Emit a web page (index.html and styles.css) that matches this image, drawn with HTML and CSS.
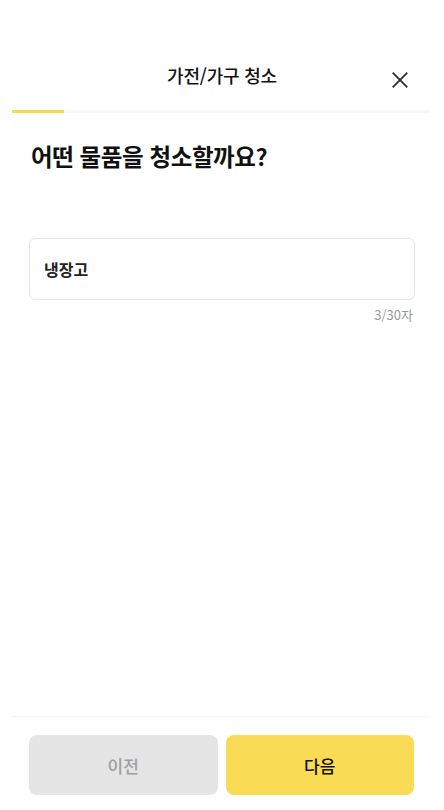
FILE: index.html
```html
<!DOCTYPE html>
<html lang="ko">
<head>
  <meta charset="UTF-8">
  <meta name="viewport" content="width=device-width, initial-scale=1.0">
  <title>가전/가구 청소</title>
  <link rel="stylesheet" href="styles.css">
</head>
<body>
  <div class="page">
    <header class="top">
      <h2 class="top-title">가전/가구 청소</h2>
      <button class="close" aria-label="닫기">
        <svg width="16" height="16" viewBox="0 0 16 16">
          <path d="M0.7 0.7 L15.3 15.3 M15.3 0.7 L0.7 15.3" stroke="#333" stroke-width="1.9" fill="none"/>
        </svg>
      </button>
    </header>

    <div class="progress"><div class="progress-fill"></div></div>

    <main class="content">
      <h1 class="question">어떤 물품을 청소할까요?</h1>
      <div class="field">
        <input class="field-input" type="text" value="냉장고" maxlength="30">
      </div>
      <p class="counter">3/30자</p>
    </main>

    <footer class="bottom">
      <button class="btn btn-prev">이전</button>
      <button class="btn btn-next">다음</button>
    </footer>
  </div>
</body>
</html>
```

FILE: styles.css
```css
/* 기본 */
body {
  margin: 0;
  font-family: "Noto Sans CJK KR", "Noto Sans", sans-serif;
  color: #111;
  background: #fff;
}

.page {
  height: 810px;
  display: flex;
  flex-direction: column;
}

/* 상단 헤더 */
.top {
  position: relative;
  height: 60px;
  margin-top: 45px;
  display: flex;
  align-items: center;
  justify-content: center;
}

.top-title {
  margin: 0;
  font-size: 18px;
  font-weight: 500;
  letter-spacing: -0.2px;
}

.close {
  position: absolute;
  right: 36px;
  top: 27px;
  width: 16px;
  height: 16px;
  padding: 0;
  border: none;
  background: none;
  display: flex;
}

/* 진행 바 */
.progress {
  margin: 5px 14px 0 12px;
  height: 3px;
  background: #f7f7f7;
}

.progress-fill {
  width: 52px;
  height: 100%;
  background: #fbd94a;
}

/* 본문 */
.content {
  flex: 1;
  padding: 0 29px;
}

.question {
  margin: 26px 0 0 2px;
  font-size: 23.5px;
  font-weight: 700;
  letter-spacing: -0.4px;
}

.field {
  margin-top: 65px;
  width: 386px;
  height: 62px;
  box-sizing: border-box;
  border: 1px solid #e6e6e6;
  border-radius: 6px;
  display: flex;
  align-items: center;
}

.field-input {
  border: none;
  outline: none;
  padding: 0 14px;
  width: 100%;
  font-family: inherit;
  font-size: 16px;
  font-weight: 700;
  color: #222;
  background: transparent;
}

.counter {
  margin: 5px 0 0;
  width: 384px;
  text-align: right;
  font-size: 13px;
  color: #999;
}

/* 하단 버튼 */
.bottom {
  margin: 0 14px 0 12px;
  border-top: 1px solid #f5f5f5;
  padding: 18px 16px 15px 17px;
  display: flex;
  gap: 8px;
}

.btn {
  flex: 1;
  height: 60px;
  border: none;
  border-radius: 8px;
  font-family: inherit;
  font-size: 17px;
  font-weight: 500;
}

.btn-prev {
  background: #e5e5e5;
  color: #9e9e9e;
}

.btn-next {
  background: #f9db55;
  color: #111;
}
```
